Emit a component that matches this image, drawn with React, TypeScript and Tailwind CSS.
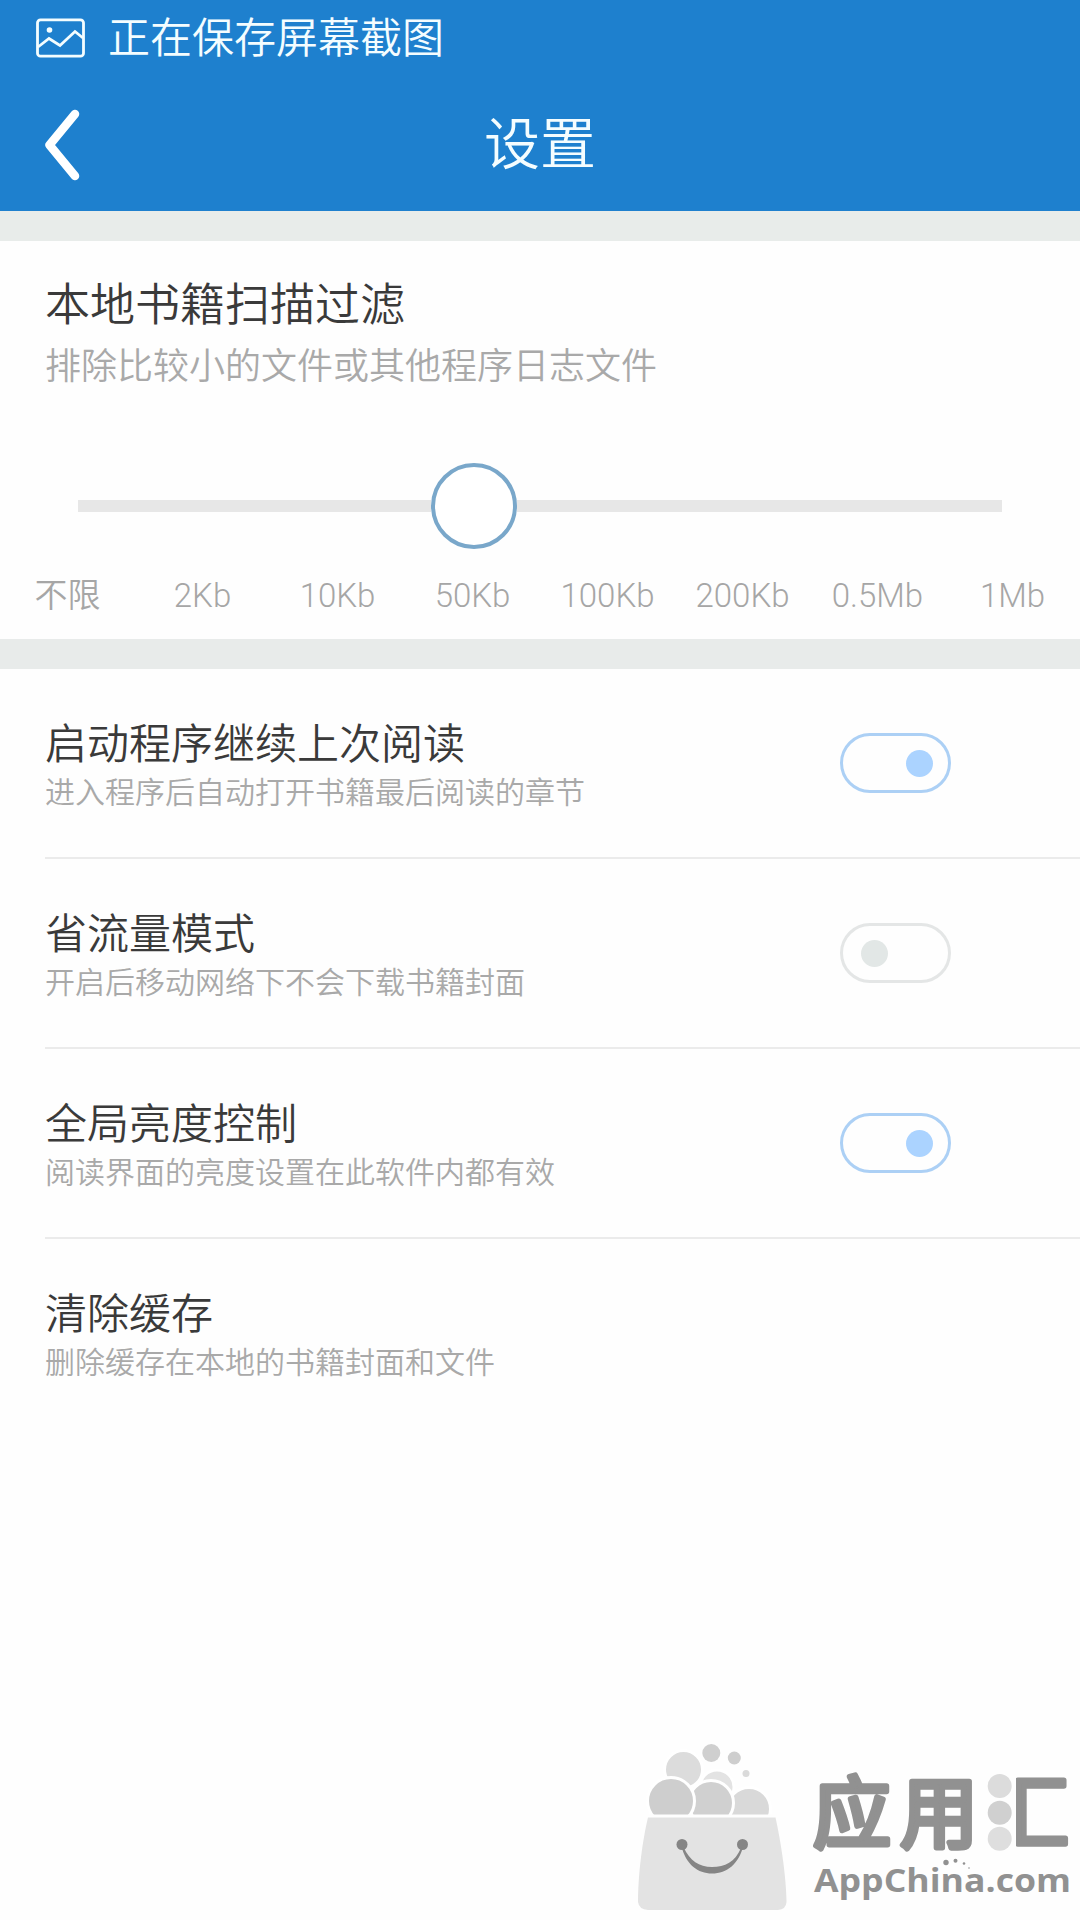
import { useState } from 'react';
import clsx from 'clsx';

const sizes = ['不限', '2Kb', '10Kb', '50Kb', '100Kb', '200Kb', '0.5Mb', '1Mb'];

const options = [
  { id: 'resume', title: '启动程序继续上次阅读', desc: '进入程序后自动打开书籍最后阅读的章节', toggle: true },
  { id: 'saver', title: '省流量模式', desc: '开启后移动网络下不会下载书籍封面', toggle: true },
  { id: 'brightness', title: '全局亮度控制', desc: '阅读界面的亮度设置在此软件内都有效', toggle: true },
  { id: 'cache', title: '清除缓存', desc: '删除缓存在本地的书籍封面和文件', toggle: false },
];

function Header() {
  return (
    <header className="h-[211px] shrink-0 bg-[#1e80ce] text-[#f4fdff]">
      {/* Status bar */}
      <div className="flex h-[78px] items-center pl-9">
        <svg className="mb-[3px] h-10 w-[50px]" viewBox="0 0 50 40" fill="none" stroke="currentColor" strokeWidth="2.8">
          <rect x="1.5" y="1.8" width="46" height="36.4" rx="3" />
          <path d="M2 29 L13 20.5 L24 27.5 L39 13.5 L47 20" />
          <circle cx="13.5" cy="12" r="2.8" fill="currentColor" stroke="none" />
        </svg>
        <span className="ml-[22px] text-[42px] leading-[42px]">正在保存屏幕截图</span>
      </div>

      {/* Title bar */}
      <div className="flex h-[133px] items-center">
        <button className="w-[200px] pl-[44px]">
          <svg className="h-[72px] w-9" viewBox="0 0 36 72" fill="none" stroke="white" strokeWidth="8.5" strokeLinecap="round">
            <path d="M31 5 L5.5 36 L31 67" strokeLinejoin="round" />
          </svg>
        </button>
        <h1 className="flex-1 text-center text-[56px] leading-[56px]">设置</h1>
        <div className="w-[200px]" />
      </div>
    </header>
  );
}

function SizeFilter() {
  const [value, setValue] = useState(3);

  return (
    <section className="flex h-[398px] shrink-0 flex-col">
      <h2 className="mt-[42px] pl-[45px] text-[45px] leading-[45px] text-[#3a3a3a]">本地书籍扫描过滤</h2>
      <p className="mt-[21px] pl-[45px] text-[36px] leading-9 text-[#a9a9a9]">排除比较小的文件或其他程序日志文件</p>

      <div className="mx-[78px] mt-[78px] flex h-[86px] items-center">
        <div className="h-3 w-[353px] bg-[#e7e7e7]" />
        <div className="size-[86px] rounded-full border-4 border-[#79a7ca] bg-white" />
        <div className="h-3 flex-1 bg-[#e7e7e7]" />
      </div>

      <div className="mt-[27px] flex">
        {sizes.map((size, i) => (
          <button
            key={size}
            className="flex-1 text-center text-[33px] leading-10 text-[#a6a6a6]"
            onClick={() => setValue(i)}
            aria-pressed={i === value}
          >
            {size}
          </button>
        ))}
      </div>
    </section>
  );
}

function Toggle({ on, onClick }: { on: boolean; onClick: () => void }) {
  return (
    <button
      className={clsx(
        'flex h-[60px] w-[111px] items-center rounded-full border-3',
        on ? 'justify-end border-[#acd0f5] px-[15px]' : 'justify-start border-[#e4e6e6] px-[18px]'
      )}
      onClick={onClick}
    >
      <span className={clsx('size-[27px] rounded-full', on ? 'bg-[#abd3ff]' : 'bg-[#e2e7e6]')} />
    </button>
  );
}

function AppChinaLogo() {
  return (
    <svg className="mt-auto h-[200px] w-[460px] self-end" viewBox="620 1720 460 200">
      {/* Bubbles */}
      <g stroke="white" strokeWidth="3">
        <circle cx="717" cy="1787" r="17" fill="#e3e3e3" />
        <circle cx="683.5" cy="1769.5" r="19" fill="#dcdcdc" />
        <circle cx="749" cy="1809" r="21.5" fill="#d9d9d9" />
        <circle cx="711" cy="1803" r="22.5" fill="#d0d0d0" />
        <circle cx="671" cy="1801" r="23.5" fill="#cecece" />
      </g>
      <circle cx="711.3" cy="1753" r="9" fill="#cfcfcf" />
      <circle cx="734.3" cy="1758" r="6.5" fill="#cecece" />
      <circle cx="746" cy="1773.5" r="3.5" fill="#dadada" />
      <rect x="640" y="1814.5" width="140" height="20" fill="#fefefe" />

      {/* Bag */}
      <path d="M648 1817.5 H775.5 C780 1838 786 1873 786.5 1902 Q786 1909.5 778 1910 H648 Q639 1909.5 638 1902 C638 1872 643 1838 648 1817.5 Z" fill="#e3e3e3" />
      <circle cx="682" cy="1844.5" r="5.5" fill="#858585" />
      <circle cx="742.5" cy="1844.5" r="5.5" fill="#858585" />
      <path d="M681 1845 C686 1865 698 1873.5 712 1873.5 C727 1873.5 739 1864 743.5 1845 L741 1848 C735 1862 725 1867 712 1867 C699 1867 690 1861 683.5 1847 Z" fill="#858585" />

      {/* Brand name */}
      <g
        fill="#919191"
        stroke="#919191"
        strokeWidth="5.5"
        strokeLinejoin="round"
        className="font-['Noto_Sans_CJK_SC',sans-serif] text-[78px] font-normal"
      >
        <text x="813" y="1842">应</text>
        <text x="900" y="1842">用</text>
        <text x="991" y="1842">汇</text>
      </g>
      <rect x="984" y="1768" width="32" height="88" fill="#fefefe" />
      <circle cx="999.7" cy="1786" r="12" fill="#dcdcdc" />
      <circle cx="999.7" cy="1812.7" r="12" fill="#d0d0d0" />
      <circle cx="999.7" cy="1838.7" r="12" fill="#dedede" />
      <text
        x="814"
        y="1891.5"
        textLength="257"
        lengthAdjust="spacingAndGlyphs"
        fill="#919191"
        className="font-['Open_Sans',sans-serif] text-[33px] font-bold"
      >
        AppChina.com
      </text>
      <g fill="#919191">
        <circle cx="946" cy="1862.5" r="2.7" />
        <circle cx="955.5" cy="1860.7" r="2" />
        <circle cx="964" cy="1863.5" r="1.3" />
        <circle cx="969" cy="1868" r="0.8" />
      </g>
    </svg>
  );
}

export default function App() {
  const [enabled, setEnabled] = useState<Record<string, boolean>>({
    resume: true,
    saver: false,
    brightness: true,
  });

  return (
    <div className="flex h-[1920px] w-[1080px] flex-col overflow-hidden bg-[#fefefe] font-[Roboto,'Noto_Sans_CJK_SC',sans-serif] font-[350]">
      <Header />
      <div className="h-[30px] shrink-0 bg-[#e8ecea]" />
      <SizeFilter />
      <div className="h-[30px] shrink-0 bg-[#e8ebea]" />

      {/* Options */}
      <ul className="pl-[45px]">
        {options.map((item) => (
          <li key={item.id} className="flex h-[190px] items-center justify-between border-b-2 border-[#ebebeb] pr-[129px] last:border-transparent">
            <div className="pt-[10px]">
              <h3 className="text-[42px] leading-[50px] text-[#3a3a3a]">{item.title}</h3>
              <p className="text-[30px] leading-[46px] text-[#a9a9a9]">{item.desc}</p>
            </div>
            {item.toggle && (
              <Toggle
                on={enabled[item.id]}
                onClick={() => setEnabled({ ...enabled, [item.id]: !enabled[item.id] })}
              />
            )}
          </li>
        ))}
      </ul>

      <AppChinaLogo />
    </div>
  );
}
